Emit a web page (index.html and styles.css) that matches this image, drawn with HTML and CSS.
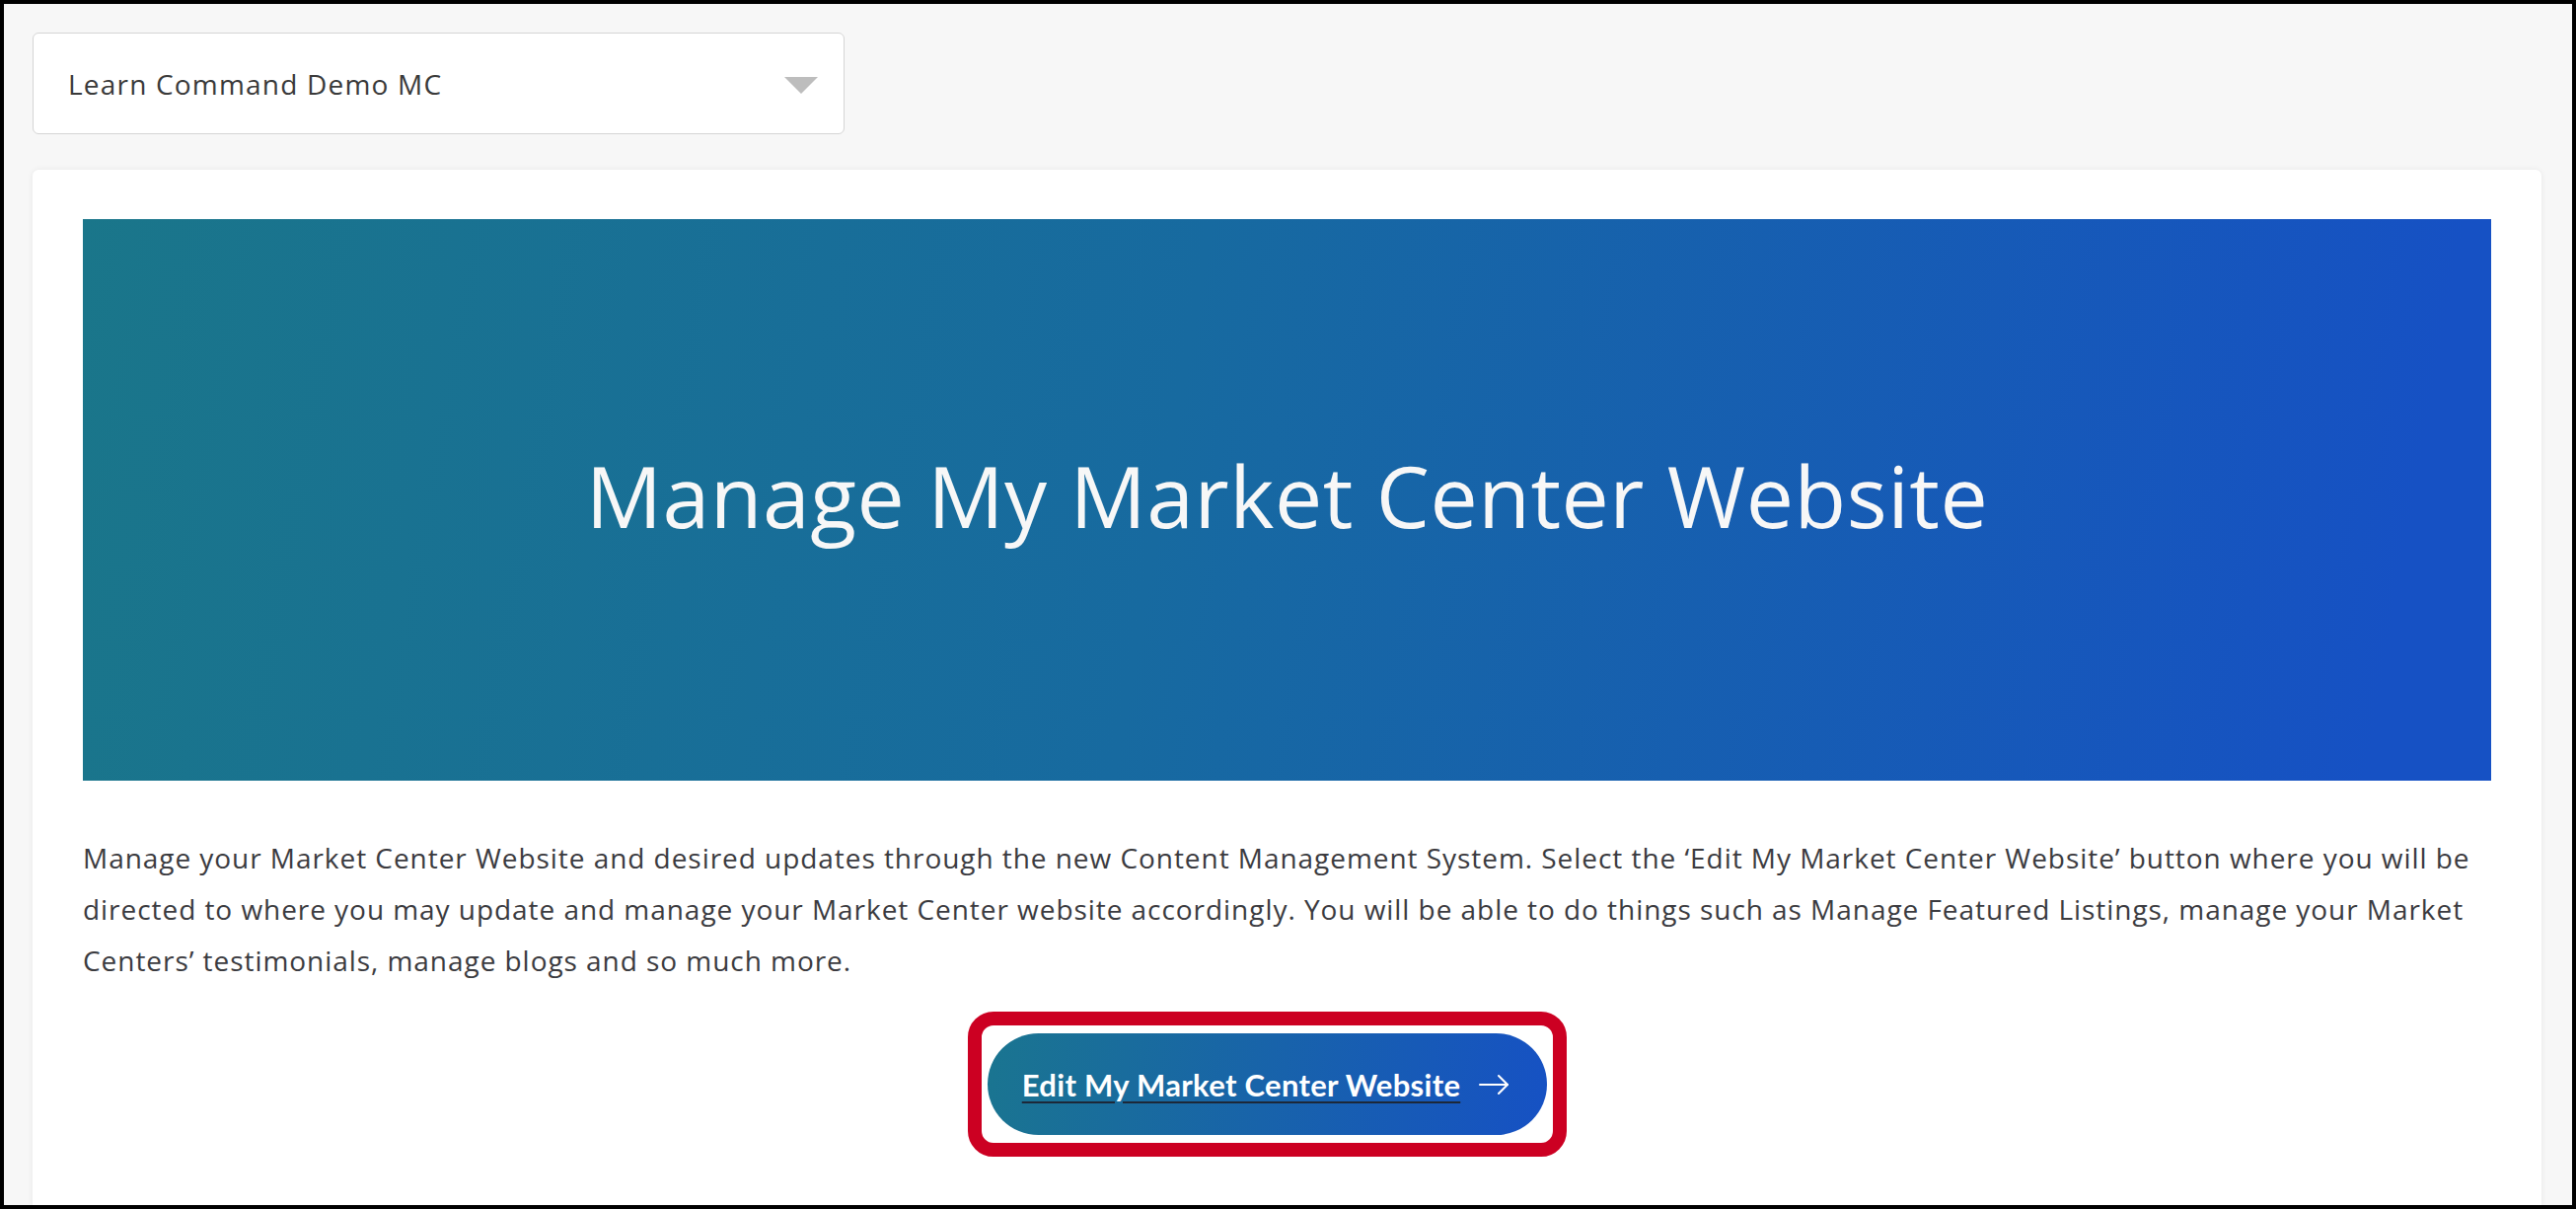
FILE: index.html
```html
<!DOCTYPE html>
<html lang="en">
<head>
  <meta charset="UTF-8">
  <meta name="viewport" content="width=device-width, initial-scale=1.0">
  <title>Manage My Market Center Website</title>
  <link rel="stylesheet" href="styles.css">
</head>
<body>
  <div class="frame">
    <div class="mc-select">
      <span class="mc-select-label">Learn Command Demo MC</span>
      <span class="mc-select-caret"></span>
    </div>

    <div class="card">
      <div class="banner">
        <h1>Manage My Market Center Website</h1>
      </div>

      <p class="intro">
        Manage your Market Center Website and desired updates through the new Content Management System. Select the ‘Edit My Market Center Website’ button where you will be directed to where you may update and manage your Market Center website accordingly. You will be able to do things such as Manage Featured Listings, manage your Market Centers’ testimonials, manage blogs and so much more.
      </p>

      <div class="cta-row">
        <div class="cta-mark">
          <a class="cta" href="#">
            <span class="cta-text">Edit My Market Center Website</span>
            <svg class="cta-arrow" width="31" height="22" viewBox="0 0 31 22" fill="none" stroke="#fff" stroke-width="2" stroke-linecap="round" stroke-linejoin="round">
              <path d="M1 11H29"/>
              <path d="M20 2L29 11L20 20"/>
            </svg>
          </a>
        </div>
      </div>
    </div>
  </div>
</body>
</html>
```

FILE: styles.css
```css
* {
  margin: 0;
  padding: 0;
  box-sizing: border-box;
}

body {
  font-family: 'Open Sans', 'Liberation Sans', sans-serif;
  background: #fff;
}

.frame {
  height: 100vh;
  border: 4px solid #000;
  background: #f7f7f7;
  padding: 29px 31px 0 29px;
  overflow: hidden;
  display: flex;
  flex-direction: column;
}

/* market center picker */
.mc-select {
  width: 823px;
  height: 103px;
  flex: none;
  background: #fff;
  border: 1px solid #d5d5d5;
  border-radius: 6px;
  display: flex;
  align-items: center;
  justify-content: space-between;
  padding: 0 26px 0 35px;
}

.mc-select-label {
  font-size: 28px;
  letter-spacing: 1.2px;
  color: #3a3a3a;
}

.mc-select-caret {
  width: 0;
  height: 0;
  border-left: 17px solid transparent;
  border-right: 17px solid transparent;
  border-top: 17px solid #bdbdbd;
  margin-top: 4px;
}

/* main card */
.card {
  flex: 1;
  margin-top: 36px;
  background: #fff;
  border-radius: 6px 6px 0 0;
  box-shadow: 0 0 6px rgba(0, 0, 0, 0.07);
  padding: 50px 51px;
}

.banner {
  height: 569px;
  background: linear-gradient(100deg, #1a768a 0%, #176aa0 45%, #1651c4 95%);
  display: flex;
  align-items: center;
  justify-content: center;
}

.banner h1 {
  font-size: 86px;
  font-weight: 400;
  color: #f7f7f7;
  letter-spacing: 0.5px;
  margin-top: -10px;
}

.intro {
  margin-top: 52px;
  font-size: 28px;
  letter-spacing: 0.95px;
  line-height: 52px;
  color: #3b3b40;
}

.cta-row {
  display: flex;
  justify-content: center;
  margin-top: 26px;
  padding-right: 40px;
}

.cta-mark {
  border: 14px solid #cc0022;
  border-radius: 26px;
  padding: 8px 6px;
}

.cta {
  height: 103px;
  border-radius: 52px;
  background: linear-gradient(100deg, #1a7590 0%, #1651c4 100%);
  display: flex;
  align-items: center;
  gap: 19px;
  padding: 0 38px 0 35px;
  text-decoration: none;
}

.cta-text {
  font-family: Lato, 'Open Sans', sans-serif;
  font-weight: 700;
  font-size: 31px;
  letter-spacing: 0.3px;
  color: #fff;
  text-decoration: underline;
  text-decoration-color: #1d2838;
  text-decoration-thickness: 2px;
  text-underline-offset: 5px;
}

.cta-arrow {
  flex: none;
}
```
